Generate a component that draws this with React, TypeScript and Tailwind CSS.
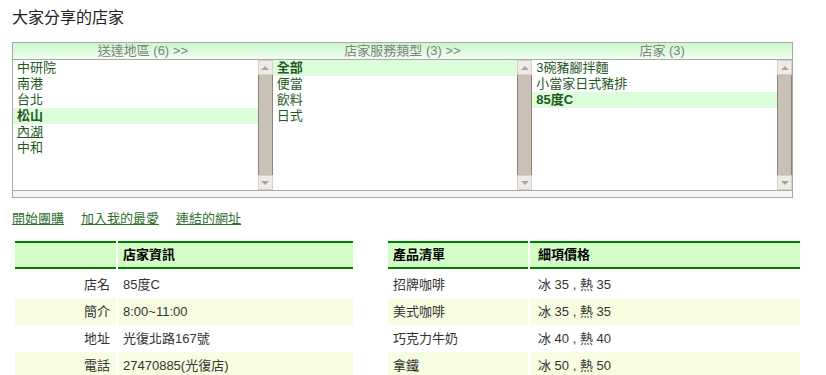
import React from "react";

function ScrollBar() {
  return (
    <div className="flex h-full w-[15px] shrink-0 flex-col">
      <div className="flex h-[15px] items-center justify-center border border-[#d6d1c8] bg-[#eeebe6]">
        <div className="h-0 w-0 border-x-[4px] border-b-[4px] border-x-transparent border-b-[#a9a49c]" />
      </div>
      <div className="flex-1 border-x border-[#8d8479] bg-[#c9c0b5]" />
      <div className="flex h-[15px] items-center justify-center border border-[#d6d1c8] bg-[#eeebe6]">
        <div className="h-0 w-0 border-x-[4px] border-t-[4px] border-x-transparent border-t-[#a9a49c]" />
      </div>
    </div>
  );
}

function ListCol({ items, selected }: { items: string[]; selected: number }) {
  return (
    <div className="flex h-full flex-1">
      <div className="flex-1">
        {items.map((it, i) => (
          <div
            key={i}
            className={
              "h-[16px] pl-[4px] leading-[16px] text-[13px] text-[#1f5a1f] " +
              (i === selected ? "bg-[#dcfcdc] font-bold" : "") +
              (it === "內湖" ? " underline" : "")
            }
          >
            {it}
          </div>
        ))}
      </div>
      <ScrollBar />
    </div>
  );
}

type Row = [string, string];

function InfoTable({
  head,
  rows,
  w1,
  w2,
  left,
  pl2,
}: {
  head: [string, string];
  rows: Row[];
  w1: string;
  w2: string;
  left: boolean;
  pl2: string;
}) {
  return (
    <div className="flex flex-col">
      <div className="flex gap-[2px]">
        <div className={w1 + " h-[28px] border-y-2 border-[#008000] bg-[#d3fcc6] pl-[5px] text-[13px] font-bold leading-[24px] text-black"}>
          {head[0]}
        </div>
        <div className={w2 + " h-[28px] border-y-2 border-[#008000] bg-[#d3fcc6] text-[13px] font-bold leading-[24px] text-black " + pl2}>
          {head[1]}
        </div>
      </div>
      <div className="mt-[2px] flex flex-col">
        {rows.map((r, i) => (
          <div key={i} className="flex gap-[2px]">
            <div
              className={
                w1 +
                " h-[27px] text-[13px] leading-[27px] text-[#333] " +
                (left ? "pr-[6px] text-right " : "pl-[5px] ") +
                (i % 2 === 1 ? "bg-[#f8fde2]" : "")
              }
            >
              {r[0]}
            </div>
            <div
              className={
                w2 +
                " h-[27px] text-[13px] leading-[27px] text-[#333] " +
                pl2 +
                " " +
                (i % 2 === 1 ? "bg-[#f8fde2]" : "")
              }
            >
              {r[1]}
            </div>
          </div>
        ))}
      </div>
    </div>
  );
}

export default function App() {
  return (
    <div className="h-[375px] w-[826px] overflow-hidden bg-white pl-[12px] pt-[8px] font-['Liberation_Sans','Noto_Sans_CJK_TC',sans-serif]">
      <div className="h-[20px] text-[16px] leading-[20px] text-[#222]">大家分享的店家</div>
      <div className="mt-[14px] w-[781px] border border-[#a8a8a8]">
        <div className="flex h-[17px] border-b border-[#a8a8a8] bg-gradient-to-b from-[#c9f7c9] to-[#f0fff0] text-[13px] leading-[16px] text-[#808080]">
          <div className="flex-1 text-center">送達地區 (6) &gt;&gt;</div>
          <div className="flex-1 text-center">店家服務類型 (3) &gt;&gt;</div>
          <div className="flex-1 text-center">店家 (3)</div>
        </div>
        <div className="flex h-[131px] border-b border-[#a8a8a8]">
          <ListCol items={["中研院", "南港", "台北", "松山", "內湖", "中和"]} selected={3} />
          <ListCol items={["全部", "便當", "飲料", "日式"]} selected={0} />
          <ListCol items={["3碗豬腳拌麵", "小當家日式豬排", "85度C"]} selected={2} />
        </div>
        <div className="h-[6px] bg-[#f6f6f6]" />
      </div>
      <div className="mt-[13px] flex h-[16px] gap-[17px] text-[13px] leading-[16px] text-[#2f6f2f]">
        <span className="underline">開始團購</span>
        <span className="underline">加入我的最愛</span>
        <span className="underline">連結的網址</span>
      </div>
      <div className="mt-[14px] flex">
        <div className="ml-[3px]">
          <InfoTable
            head={["", "店家資訊"]}
            rows={[
              ["店名", "85度C"],
              ["簡介", "8:00~11:00"],
              ["地址", "光復北路167號"],
              ["電話", "27470885(光復店)"],
            ]}
            w1="w-[101px]"
            w2="w-[235px]"
            left={true}
            pl2="pl-[5px]"
          />
        </div>
        <div className="ml-[35px]">
          <InfoTable
            head={["產品清單", "細項價格"]}
            rows={[
              ["招牌咖啡", "冰 35 , 熱 35"],
              ["美式咖啡", "冰 35 , 熱 35"],
              ["巧克力牛奶", "冰 40 , 熱 40"],
              ["拿鐵", "冰 50 , 熱 50"],
            ]}
            w1="w-[140px]"
            w2="w-[270px]"
            left={false}
            pl2="pl-[8px]"
          />
        </div>
      </div>
    </div>
  );
}
